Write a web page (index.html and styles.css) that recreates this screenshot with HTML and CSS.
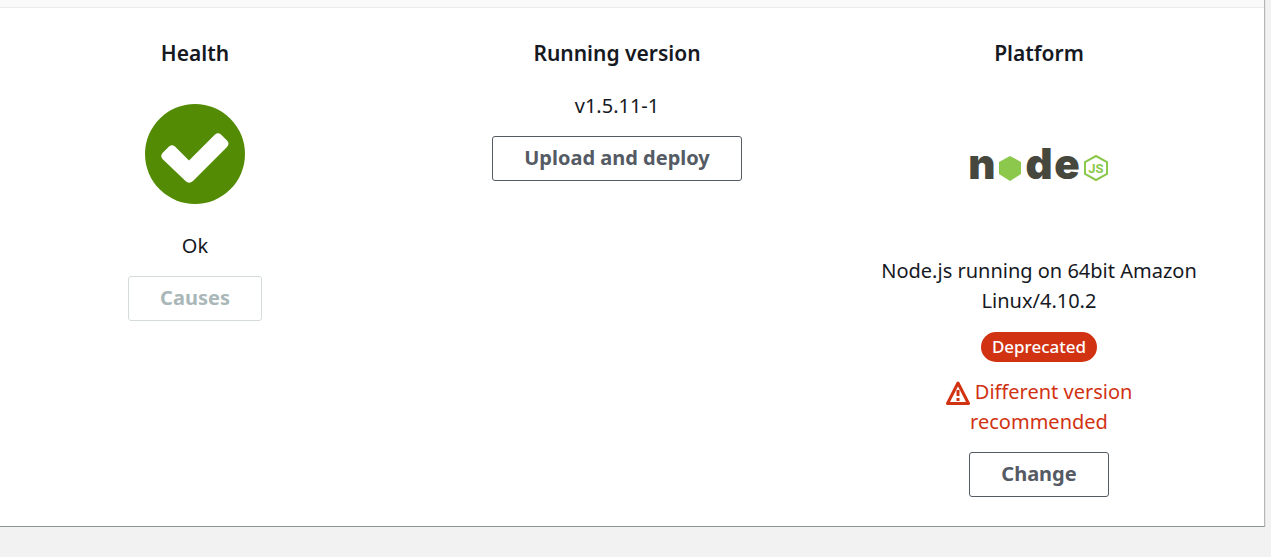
FILE: index.html
```html
<!DOCTYPE html>
<html lang="en">
<head>
    <meta charset="UTF-8">
    <meta name="viewport" content="width=device-width, initial-scale=1.0">
    <title>Environment overview</title>
    <link rel="stylesheet" href="styles.css">
</head>
<body>
    <main class="panel">
        <div class="panel-header"></div>
        <div class="overview">
            <section class="column">
                <h2>Health</h2>
                <svg class="health-icon" viewBox="0 0 100 100" role="img" aria-label="Ok">
                    <circle cx="50" cy="50" r="50" fill="#538c04"/>
                    <path d="M17.500 49L24 42.500Q27 40 30 42.500L44 56.500L70 30.500Q73 28 76 30.500L82 36.500Q85 39.500 82 43L48 77Q44 80.500 40.500 77L17.500 55Q15 52 17.500 49Z" fill="#fff"/>
                </svg>
                <p>Ok</p>
                <button type="button" class="btn" disabled>Causes</button>
            </section>

            <section class="column">
                <h2>Running version</h2>
                <p>v1.5.11-1</p>
                <button type="button" class="btn">Upload and deploy</button>
            </section>

            <section class="column">
                <h2>Platform</h2>
                <svg class="platform-logo" viewBox="0 0 144 70" role="img" aria-label="Node.js">
                    <g class="logo-word">
                        <text x="15" y="51">n</text>
                        <text x="72" y="51">d</text>
                        <text x="100" y="51">e</text>
                    </g>
                    <polygon points="43,28 54,34 54,46 43,53 32,46 32,34" fill="#8cc84b"/>
                    <polygon points="129,28 140,34 140,46 129,52 118,46 118,34" fill="none" stroke="#8cc84b" stroke-width="2"/>
                    <text class="logo-js" x="129" y="45">JS</text>
                </svg>
                <p>Node.js running on 64bit Amazon Linux/4.10.2</p>
                <span class="badge">Deprecated</span>
                <p class="warning">
                    <svg class="warning-icon" viewBox="0 0 24 24" aria-hidden="true">
                        <path d="M12 2L22.500 22.500H1.500Z" fill="none" stroke="currentColor" stroke-width="3" stroke-linejoin="round"/>
                        <path d="M12 9V15M12 17V20" stroke="currentColor" stroke-width="3"/>
                    </svg>
                    Different version recommended
                </p>
                <button type="button" class="btn">Change</button>
            </section>
        </div>
    </main>
</body>
</html>
```
FILE: styles.css
```css
body {
    font-family: "Noto Sans", sans-serif;
    font-size: 20px;
    line-height: 30px;
    color: #16191f;
    background-color: #f2f2f2;
    margin: 0;
}

.panel {
    margin: 0 6px 0 -32px;
    background-color: #fff;
    border-right: 1px solid #b4b8b8;
    border-bottom: 1px solid #8f9494;
    box-shadow: 0 1px 1px rgba(0, 0, 0, 0.3);
}

.panel-header {
    height: 7px;
    background-color: #fafafa;
    border-bottom: 1px solid #eaeded;
}

.overview {
    display: grid;
    grid-template-columns: repeat(3, 1fr);
    padding: 30px 14px 29px 16px;
}

.column {
    display: flex;
    flex-direction: column;
    align-items: center;
    padding: 0 48px;
    text-align: center;
}

h2 {
    font-size: 21px;
    font-weight: 600;
    line-height: 30px;
    margin: 0 0 23px;
}

p {
    margin: 0;
}

.btn {
    font-family: inherit;
    font-size: 20px;
    font-weight: 700;
    line-height: 30px;
    color: #545b64;
    background-color: #fff;
    border: 1px solid #545b64;
    border-radius: 3px;
    margin-top: 15px;
    padding: 6px 31px 7px;
    cursor: pointer;
}

.btn:disabled {
    color: #aab7b8;
    border-color: #d5dbdb;
    cursor: default;
}

.health-icon {
    width: 100px;
    height: 100px;
    margin: 13px 0 27px;
}

.platform-logo {
    width: 144px;
    height: 70px;
    margin: 37px 0 58px;
}

.logo-word {
    font-family: Inter, sans-serif;
    font-size: 42px;
    font-weight: 900;
    fill: #46483e;
    text-anchor: middle;
}

.logo-js {
    font-family: Roboto, sans-serif;
    font-size: 13px;
    font-weight: 700;
    fill: #8cc84b;
    text-anchor: middle;
}

.badge {
    font-size: 17px;
    font-weight: 500;
    color: #fff;
    background-color: #d13212;
    border-radius: 15px;
    margin: 16px 0 15px;
    padding: 0 11px;
}

.warning {
    color: #d13212;
}

.warning-icon {
    width: 24px;
    height: 24px;
    vertical-align: text-bottom;
}
```
